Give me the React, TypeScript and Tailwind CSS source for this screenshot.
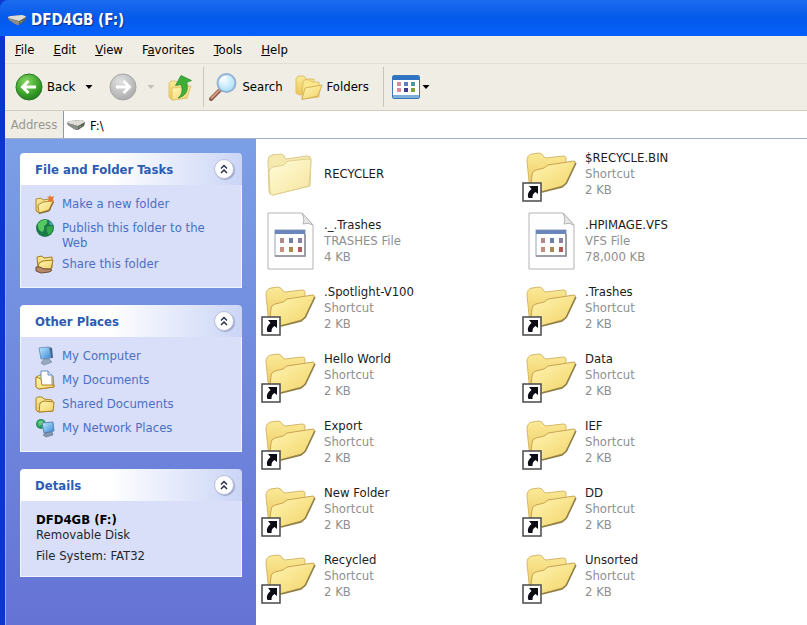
import type { ReactNode } from "react";

type Kind = "folder" | "shortcut" | "file";

interface Entry {
  name: string;
  kind: Kind;
  type?: string;
  size?: string;
}

const MENU = ["File", "Edit", "View", "Favorites", "Tools", "Help"];
// index of the underlined letter in each menu label
const MENU_KEYS = [0, 0, 0, 1, 0, 0];

const ENTRIES: Entry[] = [
  { name: "RECYCLER", kind: "folder" },
  { name: "$RECYCLE.BIN", kind: "shortcut", type: "Shortcut", size: "2 KB" },
  { name: "._.Trashes", kind: "file", type: "TRASHES File", size: "4 KB" },
  { name: ".HPIMAGE.VFS", kind: "file", type: "VFS File", size: "78,000 KB" },
  { name: ".Spotlight-V100", kind: "shortcut", type: "Shortcut", size: "2 KB" },
  { name: ".Trashes", kind: "shortcut", type: "Shortcut", size: "2 KB" },
  { name: "Hello World", kind: "shortcut", type: "Shortcut", size: "2 KB" },
  { name: "Data", kind: "shortcut", type: "Shortcut", size: "2 KB" },
  { name: "Export", kind: "shortcut", type: "Shortcut", size: "2 KB" },
  { name: "IEF", kind: "shortcut", type: "Shortcut", size: "2 KB" },
  { name: "New Folder", kind: "shortcut", type: "Shortcut", size: "2 KB" },
  { name: "DD", kind: "shortcut", type: "Shortcut", size: "2 KB" },
  { name: "Recycled", kind: "shortcut", type: "Shortcut", size: "2 KB" },
  { name: "Unsorted", kind: "shortcut", type: "Shortcut", size: "2 KB" },
];

/* ---------- icons ---------- */

/** Shared gradients, referenced by id from the icons below. */
function Gradients() {
  return (
    <svg className="absolute h-0 w-0" aria-hidden="true">
      <defs>
        <linearGradient id="paper" x1="0" y1="0" x2="1" y2="1">
          <stop offset="0" stopColor="#fffcd8" />
          <stop offset="1" stopColor="#f6e5a0" />
        </linearGradient>
        <linearGradient id="gold" x1="0" y1="0" x2="1" y2="1">
          <stop offset="0" stopColor="#fff6b4" />
          <stop offset="1" stopColor="#f2d368" />
        </linearGradient>
        <linearGradient id="goldBack" x1="0" y1="0" x2="0" y2="1">
          <stop offset="0" stopColor="#fbea98" />
          <stop offset="1" stopColor="#ebc558" />
        </linearGradient>
        <radialGradient id="green" cx="0.4" cy="0.3" r="0.75">
          <stop offset="0" stopColor="#8ad867" />
          <stop offset="0.6" stopColor="#3fa62c" />
          <stop offset="1" stopColor="#1f7a1b" />
        </radialGradient>
        <radialGradient id="grey" cx="0.4" cy="0.3" r="0.75">
          <stop offset="0" stopColor="#e2e2e2" />
          <stop offset="1" stopColor="#a9a9a9" />
        </radialGradient>
        <radialGradient id="glass" cx="0.4" cy="0.35" r="0.7">
          <stop offset="0" stopColor="#f2fcff" />
          <stop offset="1" stopColor="#a5dcf6" />
        </radialGradient>
        <linearGradient id="screen" x1="0" y1="0" x2="1" y2="1">
          <stop offset="0" stopColor="#c4edff" />
          <stop offset="1" stopColor="#3387d6" />
        </linearGradient>
      </defs>
    </svg>
  );
}

function DriveIcon() {
  return (
    <svg className="h-4 w-5 shrink-0" viewBox="0 0 20 16" aria-hidden="true">
      <path d="M1 6 Q1 4 4 4 L15 3 Q19 4 19 6 L18 9 L12 13 Q10 13 8 12 L2 8Z" fill="#5f5f5c" />
      <path d="M1 6 Q1 4 4 4 L15 3 Q19 4 19 5 L12 9Z" fill="#dddcd6" />
      <path d="M1 6 L12 9 L12 13 Q10 13 8 12 L2 8Z" fill="#8e8c88" />
      <path d="M13 10.5 L15 9.3" stroke="#63c553" strokeWidth="1" />
    </svg>
  );
}

function ArrowCircle({ back = false }: { back?: boolean }) {
  return (
    <svg className="h-7 w-7 shrink-0" viewBox="0 0 28 28" aria-hidden="true">
      <circle
        cx="14"
        cy="14"
        r="13"
        fill={back ? "url(#green)" : "url(#grey)"}
        stroke={back ? "#2c7c27" : "#a6a6a6"}
      />
      <path
        d={back ? "M21 14 H8 M13.5 8 L7.5 14 L13.5 20" : "M7 14 H20 M14.5 8 L20.5 14 L14.5 20"}
        fill="none"
        stroke="#fff"
        strokeWidth="3"
      />
    </svg>
  );
}

function UpIcon() {
  return (
    <svg className="h-7 w-7 shrink-0" viewBox="0 0 28 28" aria-hidden="true">
      <path d="M2 10 L4 8 L9 8 L11 10 L21 11 L20 25 L5 27 L2 24Z" fill="url(#goldBack)" stroke="#dcbc62" strokeWidth="0.8" />
      <path d="M5 15 L24 13 L20 25 L5 27Z" fill="url(#gold)" stroke="#dcbc62" strokeWidth="0.8" />
      <path
        d="M11 25 C15 22 16 17 14 11.5 L8.5 12.5 L14 2.5 L24.5 7.5 L19.5 9.5 C22 17 19 23 11 25Z"
        fill="#3eae39"
        stroke="#2f8f33"
        strokeWidth="0.8"
      />
    </svg>
  );
}

function SearchIcon() {
  return (
    <svg className="h-8 w-8 shrink-0" viewBox="0 0 32 32" aria-hidden="true">
      <path d="M3 28 L12 19" stroke="#8a5a48" strokeWidth="4" strokeLinecap="round" />
      <path d="M3.5 27 L11 19.5" stroke="#d39b82" strokeWidth="2" strokeLinecap="round" />
      <circle cx="18.5" cy="12" r="9" fill="url(#glass)" stroke="#94b2d6" strokeWidth="2" />
      <path d="M12.5 11 A6.5 6.5 0 0 1 18.5 6" fill="none" stroke="#fff" strokeWidth="2" />
    </svg>
  );
}

function FoldersIcon() {
  return (
    <svg className="h-7 w-7 shrink-0" viewBox="0 0 28 28" aria-hidden="true">
      <path d="M1 6 L3 3 L9 3 L11 6 L19 6 L19 20 L4 22 L1 20Z" fill="url(#goldBack)" stroke="#d9b65c" strokeWidth="0.8" />
      <path d="M8 9 L10 6.5 L15 7 L17 9 L24 9 L24 24 L7 26Z" fill="#fbe78e" stroke="#d9b65c" strokeWidth="0.8" />
      <path d="M10 15 L27 12 L23 23 L7 26.5Z" fill="url(#gold)" stroke="#cda344" strokeWidth="0.8" />
    </svg>
  );
}

function ViewsIcon() {
  const dots = ["#d98f8f", "#5f7fc4", "#4f96a0", "#d98b96", "#3c3c8f", "#7fa03c"];
  return (
    <svg className="h-6 w-7 shrink-0" viewBox="0 0 28 24" aria-hidden="true">
      <rect x="0.5" y="0.5" width="27" height="23" rx="1.5" fill="#fff" stroke="#3c79b9" />
      <rect x="1" y="1" width="26" height="4" fill="#2f73c2" />
      <rect x="1" y="20" width="26" height="3" fill="#7eaedb" />
      {dots.map((fill, i) => (
        <rect key={i} x={5 + (i % 3) * 7} y={7 + Math.floor(i / 3) * 6} width="4" height="4" fill={fill} />
      ))}
    </svg>
  );
}

function Caret({ muted = false }: { muted?: boolean }) {
  return (
    <svg
      className={`h-1 w-2 shrink-0 ${muted ? "text-[#c4c2b8]" : "text-black"}`}
      viewBox="0 0 8 4"
      aria-hidden="true"
    >
      <path d="M0.5 0 H7.5 L4 4Z" fill="currentColor" />
    </svg>
  );
}

function FolderIcon() {
  return (
    <svg className="h-12 w-13" viewBox="0 0 52 48" aria-hidden="true">
      <path
        d="M1 10 Q1 6 5 5 L14 4 Q17 4 18 8 L19 9 L40 6 Q44 6 44 9 L43 36 L6 45 Q2 45 2 41Z"
        fill="#f6e9ad"
        stroke="#dcca8c"
      />
      <path
        d="M2 22 Q2 18 6 17 L17 15 L21 11 L41 9 Q44 9 44 12 L42 36 L6 45 Q3 45 3 42Z"
        fill="url(#paper)"
        stroke="#e0d092"
      />
    </svg>
  );
}

function ShortcutIcon() {
  return (
    <svg className="h-14 w-14" viewBox="0 0 56 56" aria-hidden="true">
      <path
        d="M5 15 Q5 9 10 8 L17 7 Q20 7 22 11 L24 12 L41 10 Q44 10 44 12 L44 38 L22 45 L8 45Z"
        fill="url(#goldBack)"
        stroke="#d6b86c"
      />
      <path
        d="M10 29 Q10 25 14 24 L22 22 L26 19 L52 15 Q54 15 53 18 L44 37 Q43 39 40 40 L19 46 L8 46Z"
        fill="url(#gold)"
        stroke="#c9a452"
      />
      <path d="M20 46 L40 41 L44.5 37 L54 17" fill="none" stroke="#8f8046" strokeWidth="1.5" />
      <rect x="1" y="37" width="18" height="18" fill="#fff" stroke="#484848" strokeWidth="1.5" />
      <path d="M7 40 H16 V48 L13.5 46 C11 47.5 10.5 49 10.5 52 H6.5 C5 48.5 6.5 45.5 9.5 43Z" fill="#0c0c14" />
    </svg>
  );
}

function FileIcon() {
  const dots = ["#b08a8a", "#6f7fa8", "#8a7f9f", "#c78f82", "#a98a4a", "#b05a5a"];
  return (
    <svg className="h-15 w-12" viewBox="0 0 48 60" aria-hidden="true">
      <path d="M1 2 H35 L46 14 V58 H1Z" fill="#fefefe" stroke="#b4b4b4" />
      <path d="M35 2 Q38 9 36 13 Q41 11 46 14Z" fill="#e8e8e8" stroke="#b4b4b4" />
      <rect x="8" y="19" width="30" height="26" fill="#fff" stroke="#97a3b8" />
      <rect x="8" y="19" width="30" height="4" fill="#6a86bb" />
      <path d="M8 45 H38 V23" fill="none" stroke="#8c8c94" strokeWidth="1.5" />
      {dots.map((fill, i) => (
        <rect key={i} x={13 + (i % 3) * 9} y={27 + Math.floor(i / 3) * 9} width="4" height="5" fill={fill} />
      ))}
    </svg>
  );
}

function SmallIcon({ children }: { children: ReactNode }) {
  return (
    <svg className="h-5 w-5 shrink-0" viewBox="0 0 20 20" aria-hidden="true">
      {children}
    </svg>
  );
}

const newFolderIcon = (
  <SmallIcon>
    <path d="M1 5 L6 4 L8 6 L14 5 L15 16 L4 19 L1 17Z" fill="url(#goldBack)" stroke="#b08a3a" />
    <path d="M3 11 L8 8 L18 7 L14 16 L4 19Z" fill="url(#gold)" stroke="#b08a3a" />
    <path d="M4 19.5 L14 17 L18.5 8" fill="none" stroke="#7a5a20" />
    <path d="M15 1 L16 3 L19 2 L18 5 L19 8 L16 7 L13 8 L14 5 L12 2 L14 3Z" fill="#e5782e" />
  </SmallIcon>
);

const globeIcon = (
  <SmallIcon>
    <circle cx="10" cy="10" r="9" fill="#1c7a4a" />
    <path d="M3 6 Q7 1 12 2 Q13 6 9 8 Q10 12 7 14 Q2 11 3 6Z" fill="#55c862" />
    <path d="M12 9 Q16 7 18 9 Q18 14 14 17 Q11 13 12 9Z" fill="#36a84c" />
    <path d="M14 3 Q17 4 18 7 L15 7Z" fill="#4aa6c9" />
  </SmallIcon>
);

const shareIcon = (
  <SmallIcon>
    <path d="M2 3 L7 2 L9 4 L17 3 L17 14 L3 15Z" fill="url(#goldBack)" stroke="#a27a25" />
    <path d="M4 9 L8 7 L18 6 L16 15 L3 15Z" fill="url(#gold)" stroke="#a27a25" />
    <path d="M1 13 Q5 12 9 15 L16 15 Q18 17 14 18 L6 19 L1 17Z" fill="#b98a68" stroke="#6d4c38" />
  </SmallIcon>
);

const computerIcon = (
  <SmallIcon>
    <path d="M4 2 L14 1 L16 12 L6 13Z" fill="url(#screen)" stroke="#7296bd" />
    <path d="M9 13 L14 13 L17 16 L9 19 L6 17Z" fill="#97a9bc" stroke="#667b93" strokeWidth="0.6" />
    <path d="M14.5 1 L17 2 L18 12 L16 12Z" fill="#43638f" />
  </SmallIcon>
);

const documentsIcon = (
  <SmallIcon>
    <path d="M1 7 L5 5 L18 6 L19 17 L4 19 L1 17Z" fill="url(#goldBack)" stroke="#b2852b" />
    <path d="M6 1 H13 L17 5 V16 H6Z" fill="#fff" stroke="#6d8fc1" />
    <path d="M13 1 V5 H17" fill="#cfe0f6" stroke="#6d8fc1" />
    <path d="M1 7 L6 9 L7 15 L19 15 L19 17 L4 19 L1 17Z" fill="url(#gold)" stroke="#b2852b" />
  </SmallIcon>
);

const sharedIcon = (
  <SmallIcon>
    <path d="M1 5 Q1 3 3 3 L7 3 L9 5 L17 6 L18 17 L3 18 L1 16Z" fill="url(#goldBack)" stroke="#ad8127" />
    <path d="M5 9 L9 7 L19 8 L18 17 L4 18Z" fill="url(#gold)" stroke="#ad8127" />
  </SmallIcon>
);

const networkIcon = (
  <SmallIcon>
    <circle cx="6" cy="6" r="5" fill="#2b9468" />
    <path d="M3 4 Q6 1 9 4 Q7 7 4 8Z" fill="#66cf79" />
    <path d="M7 5 L18 4 L19 13 L9 15Z" fill="url(#screen)" stroke="#5f86b4" />
    <path d="M10 15 L17 14 L18 17 L11 19 L8 17Z" fill="#8296af" stroke="#5d718b" strokeWidth="0.6" />
  </SmallIcon>
);

const ICONS: Record<Kind, ReactNode> = {
  folder: <FolderIcon />,
  shortcut: <ShortcutIcon />,
  file: <FileIcon />,
};

/* ---------- sidebar ---------- */

function Panel({ title, children }: { title: string; children: ReactNode }) {
  return (
    <section className="overflow-hidden rounded-t-sm">
      <header className="flex h-8 items-center justify-between bg-gradient-to-r from-white from-40% to-[#cbd5f6] pr-2 pl-[15px]">
        <h2 className="pt-0.5 font-bold text-[#2b5cb4]">{title}</h2>
        <button
          type="button"
          aria-label={`Collapse ${title}`}
          className="flex h-5 w-5 items-center justify-center rounded-full border border-[#b9c1da] bg-white shadow-[1px_1px_1px_#9aa5ca]"
        >
          <svg className="h-3 w-3" viewBox="0 0 12 12" fill="none" stroke="#26304c" strokeWidth="1.5" aria-hidden="true">
            <path d="M3 5.5 L6 2.5 L9 5.5 M3 10 L6 7 L9 10" />
          </svg>
        </button>
      </header>
      <div className="border border-t-0 border-[#f1f4ff] bg-[#d9dff8] px-[14px] leading-[15px]">{children}</div>
    </section>
  );
}

function TaskLink({ icon, children }: { icon: ReactNode; children: ReactNode }) {
  return (
    <li>
      <a href="#" className="flex items-start gap-[7px] text-[#4a6fc4] hover:underline">
        {icon}
        <span className="pt-0.5">{children}</span>
      </a>
    </li>
  );
}

function Sidebar() {
  return (
    <aside className="flex w-[250px] shrink-0 flex-col gap-[17px] bg-gradient-to-b from-[#7b9fe6] to-[#6573d5] px-[14px] pt-[14px]">
      <Panel title="File and Folder Tasks">
        <ul className="flex flex-col gap-1 pt-[9px] pr-5 pb-[13px]">
          <TaskLink icon={newFolderIcon}>Make a new folder</TaskLink>
          <TaskLink icon={globeIcon}>Publish this folder to the Web</TaskLink>
          <TaskLink icon={shareIcon}>Share this folder</TaskLink>
        </ul>
      </Panel>
      <Panel title="Other Places">
        <ul className="flex flex-col gap-1 pt-[9px] pb-[13px]">
          <TaskLink icon={computerIcon}>My Computer</TaskLink>
          <TaskLink icon={documentsIcon}>My Documents</TaskLink>
          <TaskLink icon={sharedIcon}>Shared Documents</TaskLink>
          <TaskLink icon={networkIcon}>My Network Places</TaskLink>
        </ul>
      </Panel>
      <Panel title="Details">
        <div className="px-px pt-[11px] pb-[13px] text-[#26262e]">
          <p className="font-bold text-black">DFD4GB (F:)</p>
          <p>Removable Disk</p>
          <p className="pt-1.5">File System: FAT32</p>
        </div>
      </Panel>
    </aside>
  );
}

/* ---------- main pane ---------- */

function FileTile({ entry }: { entry: Entry }) {
  return (
    <li className="flex h-[67px] items-center">
      <div className="flex w-[63px] shrink-0 items-center justify-start">
        <span className={entry.kind === "shortcut" ? "" : "pl-1.5"}>{ICONS[entry.kind]}</span>
      </div>
      <div className="whitespace-nowrap text-[#8f8f8f]">
        <p className="text-[#1c1c1c]">{entry.name}</p>
        {entry.type && <p>{entry.type}</p>}
        {entry.size && <p>{entry.size}</p>}
      </div>
    </li>
  );
}

export default function App() {
  return (
    <div className="flex min-h-screen flex-col bg-[#0a3bd0] font-['DejaVu_Sans_Condensed','DejaVu_Sans',sans-serif] text-[13px] leading-4">
      <Gradients />

      <header className="flex h-9 items-center gap-1 rounded-tl-lg bg-gradient-to-b from-[#1c6cf0] via-[#0359ea] to-[#0560fb] pt-1 pl-[7px]">
        <DriveIcon />
        <h1 className="text-[15px] font-bold text-white [text-shadow:1px_1px_1px_#0a2f8a]">DFD4GB (F:)</h1>
      </header>

      <div className="flex grow flex-col border-l-5 border-[#0a35cf] bg-[#efede4]">
        <nav className="flex h-7 items-center gap-[19px] border-b border-[#e2dfd4] pl-[10px]">
          {MENU.map((label, i) => {
            const key = MENU_KEYS[i];
            return (
              <button key={label} type="button">
                {label.slice(0, key)}
                <span className="underline">{label[key]}</span>
                {label.slice(key + 1)}
              </button>
            );
          })}
        </nav>

        <div className="flex h-[47px] items-center border-b border-[#d0cdbf] pl-[10px]">
          <button type="button" className="flex items-center gap-1">
            <ArrowCircle back />
            Back
          </button>
          <button type="button" aria-label="Back history" className="pr-4 pl-2.5">
            <Caret />
          </button>
          <button type="button" aria-label="Forward" className="flex items-center gap-2.5">
            <ArrowCircle />
            <Caret muted />
          </button>
          <button type="button" aria-label="Up" className="pr-2 pl-3">
            <UpIcon />
          </button>
          <div className="mr-1 h-10 w-px bg-[#c9c6b8]" />
          <button type="button" className="flex items-center gap-0.5">
            <SearchIcon />
            Search
          </button>
          <button type="button" className="flex items-center gap-1 pr-3.5 pl-3">
            <FoldersIcon />
            Folders
          </button>
          <div className="mr-2 h-10 w-px bg-[#c9c6b8]" />
          <button type="button" aria-label="Views" className="flex items-center gap-0.5">
            <ViewsIcon />
            <Caret />
          </button>
        </div>

        <div className="flex h-7 items-stretch border-b border-[#9fb0c8]">
          <label htmlFor="address" className="flex w-[58px] items-center justify-center text-[#9a988e]">
            Address
          </label>
          <div className="flex grow items-center gap-1 border-l border-[#7f9db9] bg-white pl-0.5">
            <DriveIcon />
            <input id="address" defaultValue={"F:\\"} className="grow bg-transparent pt-0.5 text-black outline-none" />
          </div>
        </div>

        <div className="flex grow border-l border-[#8fb0f0]">
          <Sidebar />
          <main className="grow bg-white pt-px pl-[5px]">
            <ul className="grid grid-cols-[repeat(auto-fill,261px)]">
              {ENTRIES.map((entry) => (
                <FileTile key={entry.name} entry={entry} />
              ))}
            </ul>
          </main>
        </div>
      </div>
    </div>
  );
}
